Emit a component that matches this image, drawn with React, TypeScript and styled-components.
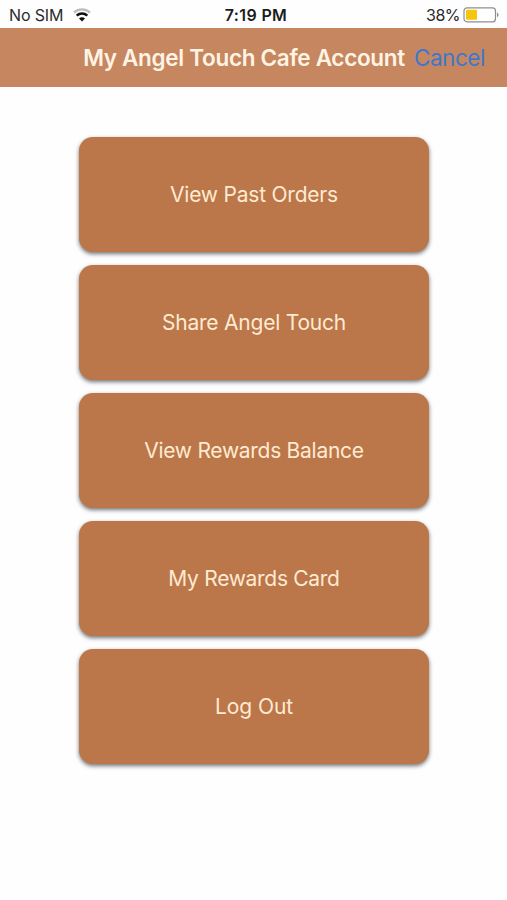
import React from "react";
import styled, { createGlobalStyle } from "styled-components";

const GlobalStyle = createGlobalStyle`
  * { box-sizing: border-box; }
  body { margin: 0; background: #fefefe; font-family: Inter, "Liberation Sans", sans-serif; }
`;

const Screen = styled.main`
  display: flex;
  flex-direction: column;
  height: 900px;
  background: #fefefe;
`;

const StatusBar = styled.div`
  display: grid;
  grid-template-columns: 1fr auto 1fr;
  align-items: center;
  height: 28px;
  padding: 2px 7px 0 9px;
  font-size: 16px;
  line-height: 20px;
  color: #2b2b2b;
`;

const StatusGroup = styled.div<{ $end?: boolean }>`
  display: flex;
  align-items: center;
  justify-content: ${(p) => (p.$end ? "flex-end" : "flex-start")};
  gap: ${(p) => (p.$end ? "3px" : "10px")};
`;

const Carrier = styled.span`
  letter-spacing: -0.15px;
`;

const Clock = styled.time`
  margin-left: 3px;
  font-weight: 600;
  letter-spacing: 0.35px;
  color: #1c1c1c;
`;

const Percent = styled.span`
  letter-spacing: -0.5px;
`;

const NavBar = styled.header`
  display: flex;
  align-items: center;
  justify-content: flex-end;
  gap: 9px;
  height: 59px;
  padding: 0 22px 0 0;
  background: #c68760;
`;

const Title = styled.h1`
  margin: 0;
  font-size: 22.5px;
  font-weight: 600;
  letter-spacing: -0.31px;
  white-space: nowrap;
  color: #fff4e4;
`;

const Cancel = styled.button`
  padding: 0;
  border: 0;
  background: none;
  font: 400 22.5px Inter, sans-serif;
  letter-spacing: -0.45px;
  color: #3f78cb;
`;

const Menu = styled.nav`
  display: flex;
  flex-direction: column;
  gap: 13px;
  width: 350px;
  margin: 50px 0 0 79px;
`;

const MenuButton = styled.button<{ $spacing: number }>`
  height: 115px;
  padding: 0;
  border: 0;
  border-radius: 14px;
  background: #bb7749;
  box-shadow: 0 2px 4px rgba(0, 0, 0, 0.55);
  font: 400 21px Inter, sans-serif;
  letter-spacing: ${(p) => p.$spacing}px;
  color: #ffead2;
`;

const items = [
  { label: "View Past Orders", spacing: -0.22 },
  { label: "Share Angel Touch", spacing: -0.22 },
  { label: "View Rewards Balance", spacing: -0.28 },
  { label: "My Rewards Card", spacing: -0.3 },
  { label: "Log Out", spacing: -0.08 },
];

const WifiIcon = () => (
  <svg width="18" height="14" viewBox="0 0 18 14" fill="none">
    <path d="M1 4.6a11.8 11.8 0 0 1 16 0" stroke="#bdbdbd" strokeWidth="2.2" />
    <path d="M3.7 7.6a7.8 7.8 0 0 1 10.6 0" stroke="#111" strokeWidth="2.6" />
    <path d="M9 13.4 6 10.5a4.2 4.2 0 0 1 6 0Z" fill="#111" />
  </svg>
);

const BatteryIcon = () => (
  <svg width="37" height="16" viewBox="0 0 37 16">
    <rect x="1" y="0.8" width="31.5" height="14" rx="3" fill="#fff" stroke="#8e8e90" strokeWidth="1.2" />
    <rect x="3" y="2.8" width="11" height="10" rx="1" fill="#f4c60c" />
    <path d="M34 5.5c2 .6 2 4 0 4.6Z" fill="#8e8e90" />
  </svg>
);

export default function App() {
  return (
    <>
      <GlobalStyle />
      <Screen>
        <StatusBar>
          <StatusGroup>
            <Carrier>No SIM</Carrier>
            <WifiIcon />
          </StatusGroup>
          <Clock>7:19 PM</Clock>
          <StatusGroup $end>
            <Percent>38%</Percent>
            <BatteryIcon />
          </StatusGroup>
        </StatusBar>
        <NavBar>
          <Title>My Angel Touch Cafe Account</Title>
          <Cancel>Cancel</Cancel>
        </NavBar>
        <Menu>
          {items.map((item) => (
            <MenuButton key={item.label} $spacing={item.spacing}>
              {item.label}
            </MenuButton>
          ))}
        </Menu>
      </Screen>
    </>
  );
}
